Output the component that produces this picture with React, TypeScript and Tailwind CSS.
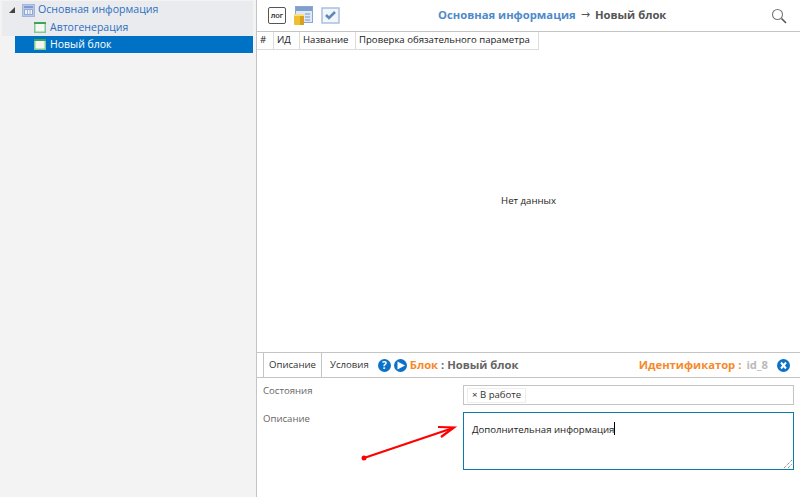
export default function App() {
  return (
    <div className="relative flex h-[497px] w-[800px] overflow-hidden bg-white font-['Open_Sans',sans-serif] text-[9.6px] text-[#333]">
      <aside className="h-full w-[256px] shrink-0 bg-[#f3f3f4] pl-[2px] pr-[3px] pt-[1px]">
        <div className="flex h-[18px] items-center bg-[#e9ebef]">
          <svg width="6" height="6" viewBox="0 0 6 6" className="ml-[7px]"><path d="M6 0V6H0Z" fill="#444" /></svg>
          <svg width="13" height="13" viewBox="0 0 13 13" className="ml-[7px]">
            <rect x="0.5" y="0.5" width="12" height="12" fill="#b9c9e6" stroke="#a3b6da" />
            <rect x="2" y="2" width="9" height="2" fill="#7f9bcf" />
            <rect x="2.500" y="5.5" width="8" height="5" fill="#eef2fa" stroke="#8fa7d4" />
            <path d="M5.5 5.5V10.5M8 5.5V10.5" stroke="#a3b6da" />
          </svg>
          <span className="ml-[3px] text-[10.6px] text-[#2f6fc0]">Основная информация</span>
        </div>
        <div className="flex h-[17px] items-center bg-[#e9ebef] pl-[32px]">
          <Leaf />
          <span className="ml-[4px] text-[10.5px] text-[#2f6fc0]">Автогенерация</span>
        </div>
        <div className="ml-[13px] flex h-[17px] items-center bg-[#0072c6] pl-[19px]">
          <Leaf selected />
          <span className="ml-[4px] text-[10.5px] text-white">Новый блок</span>
        </div>
      </aside>

      <main className="flex min-w-0 flex-1 flex-col border-l border-[#c4c4c4]">
        <div className="flex h-[32px] shrink-0 items-center border-b border-[#c4c4c4] pl-[11px] pr-[13px]">
          <div className="flex h-[17px] w-[18px] items-center justify-center rounded-[2px] border border-[#555] font-['Roboto',sans-serif] text-[8px] font-medium leading-none text-[#333]">лог</div>
          <svg width="19" height="19" viewBox="0 0 19 19" className="ml-[8px]">
            <rect x="1.5" y="0.5" width="17" height="16" fill="#dfe8f4" stroke="#8aa7cf" />
            <rect x="2" y="1" width="16" height="4" fill="#7f9fcd" />
            <rect x="11" y="7" width="5" height="2" fill="#a9bfdd" />
            <rect x="11" y="10" width="5" height="2" fill="#a9bfdd" />
            <rect x="11" y="13" width="5" height="2" fill="#a9bfdd" />
            <rect x="0" y="8" width="10" height="11" rx="1" fill="#f0bf30" />
            <rect x="0" y="8" width="10" height="2" fill="#f8e08a" />
            <rect x="6" y="10" width="4" height="9" fill="#d8a020" />
          </svg>
          <svg width="19" height="17" viewBox="0 0 19 17" className="ml-[8px]">
            <rect x="1" y="1" width="17" height="15" fill="#f2f5fa" stroke="#a9c0de" strokeWidth="1.5" />
            <path d="M5 8l3 3 6-6" fill="none" stroke="#5f88bd" strokeWidth="2.6" />
          </svg>
          <div className="ml-[98px] flex items-center whitespace-nowrap text-[11.25px] font-bold">
            <span className="text-[#4f8ac9]">Основная информация</span>
            <span className="ml-[5px] font-['DejaVu_Sans',sans-serif] text-[11px] font-normal text-[#555]">→</span>
            <span className="ml-[5px] text-[#555]">Новый блок</span>
          </div>
          <svg width="16" height="16" viewBox="0 0 16 16" className="ml-auto">
            <circle cx="6.5" cy="6.5" r="5" fill="none" stroke="#777" strokeWidth="1.1" />
            <path d="M10.5 10.5L15 15" stroke="#555" strokeWidth="1.6" />
          </svg>
        </div>

        <div className="flex h-[18px] shrink-0 text-[#222]">
          <div className="flex w-[17px] items-center border-b border-r border-[#dcdcdc] pl-[3px]">#</div>
          <div className="flex w-[26px] items-center border-b border-r border-[#dcdcdc] pl-[3px]">ИД</div>
          <div className="flex w-[56px] items-center border-b border-r border-[#dcdcdc] pl-[3px]">Название</div>
          <div className="flex w-[183px] items-center border-b border-r border-[#dcdcdc] pl-[3px]">Проверка обязательного параметра</div>
        </div>

        <div className="flex flex-1 items-center justify-center text-[#222]">Нет данных</div>

        <div className="flex h-[26px] shrink-0 items-stretch border-y border-[#c4c4c4] pl-[6px] pr-[10px]">
          <div className="flex w-[59px] items-center justify-center border-x border-[#c4c4c4] text-[#333]">Описание</div>
          <div className="ml-[8px] flex items-center text-[#333]">Условия</div>
          <div className="ml-[9px] flex items-center">
            <svg width="13" height="13" viewBox="0 0 13 13"><circle cx="6.5" cy="6.5" r="6.5" fill="#0b72c8" /><text x="6.5" y="10" textAnchor="middle" fontSize="10" fontWeight="700" fill="#fff" fontFamily="'Open Sans',sans-serif">?</text></svg>
            <svg width="13" height="13" viewBox="0 0 13 13" className="ml-[3px]"><circle cx="6.5" cy="6.5" r="6.5" fill="#0b72c8" /><path d="M3.500 2.500L11 6.5L3.500 10.500Z" fill="#fff" /></svg>
            <span className="ml-[3px] text-[11.25px] font-bold text-[#f58a2c]">Блок</span>
            <span className="whitespace-pre text-[11.25px] font-bold text-[#666]"> : Новый блок</span>
          </div>
          <div className="ml-auto flex items-center text-[11.25px] font-bold">
            <span className="text-[#f58a2c]">Идентификатор :</span>
            <span className="ml-[5px] text-[#bbb]">id_8</span>
            <svg width="13" height="13" viewBox="0 0 13 13" className="ml-[9px]"><circle cx="6.5" cy="6.5" r="6.5" fill="#0b72c8" /><path d="M4 3.5L9 9.5M9 3.5L4 9.5" stroke="#fff" strokeWidth="2" /></svg>
          </div>
        </div>

        <div className="flex h-[119px] shrink-0 flex-col px-[6px] pt-[7px]">
          <div className="flex h-[20px] items-start">
            <span className="w-[200px] leading-[12px] text-[#666]">Состояния</span>
            <div className="flex h-[20px] flex-1 items-center border border-[#c4c4c4] pl-[3px]">
              <span className="flex h-[15px] items-center border border-[#eee] px-[4px] text-[#333]">× В работе</span>
            </div>
          </div>
          <div className="mt-[7px] flex items-start">
            <span className="w-[200px] leading-[14px] text-[#666]">Описание</span>
            <div className="relative h-[58px] flex-1 border border-[#0a7cac] pl-[8px] pt-[7px] leading-[14px] text-[#222]">
              <span>Дополнительная информация</span><span className="inline-block h-[13px] w-px translate-y-[2px] bg-black" />
              <svg width="10" height="10" viewBox="0 0 10 10" className="absolute bottom-0 right-0">
                <path d="M1 9L9 1M5 9L9 5" stroke="#666" strokeWidth="1" strokeDasharray="1 1" />
              </svg>
            </div>
          </div>
        </div>
      </main>

      <svg width="800" height="497" viewBox="0 0 800 497" className="pointer-events-none absolute left-0 top-0">
        <circle cx="364" cy="458" r="2.5" fill="#f00" />
        <path d="M364 458L453 428" stroke="#f00" strokeWidth="2.2" fill="none" />
        <path d="M438 427L454 427.500L441 437" stroke="#f00" strokeWidth="2.2" fill="none" />
      </svg>
    </div>
  );
}

function Leaf({ selected }: { selected?: boolean }) {
  return (
    <svg width="12" height="11" viewBox="0 0 12 11">
      <rect x="0.75" y="0.75" width="10.5" height="9.5" fill={selected ? "#f4f6f0" : "#f4f7f2"} stroke="#86c896" strokeWidth="1.5" />
      <rect x="0" y="0" width="12" height="2" fill="#3fa35a" />
    </svg>
  );
}
